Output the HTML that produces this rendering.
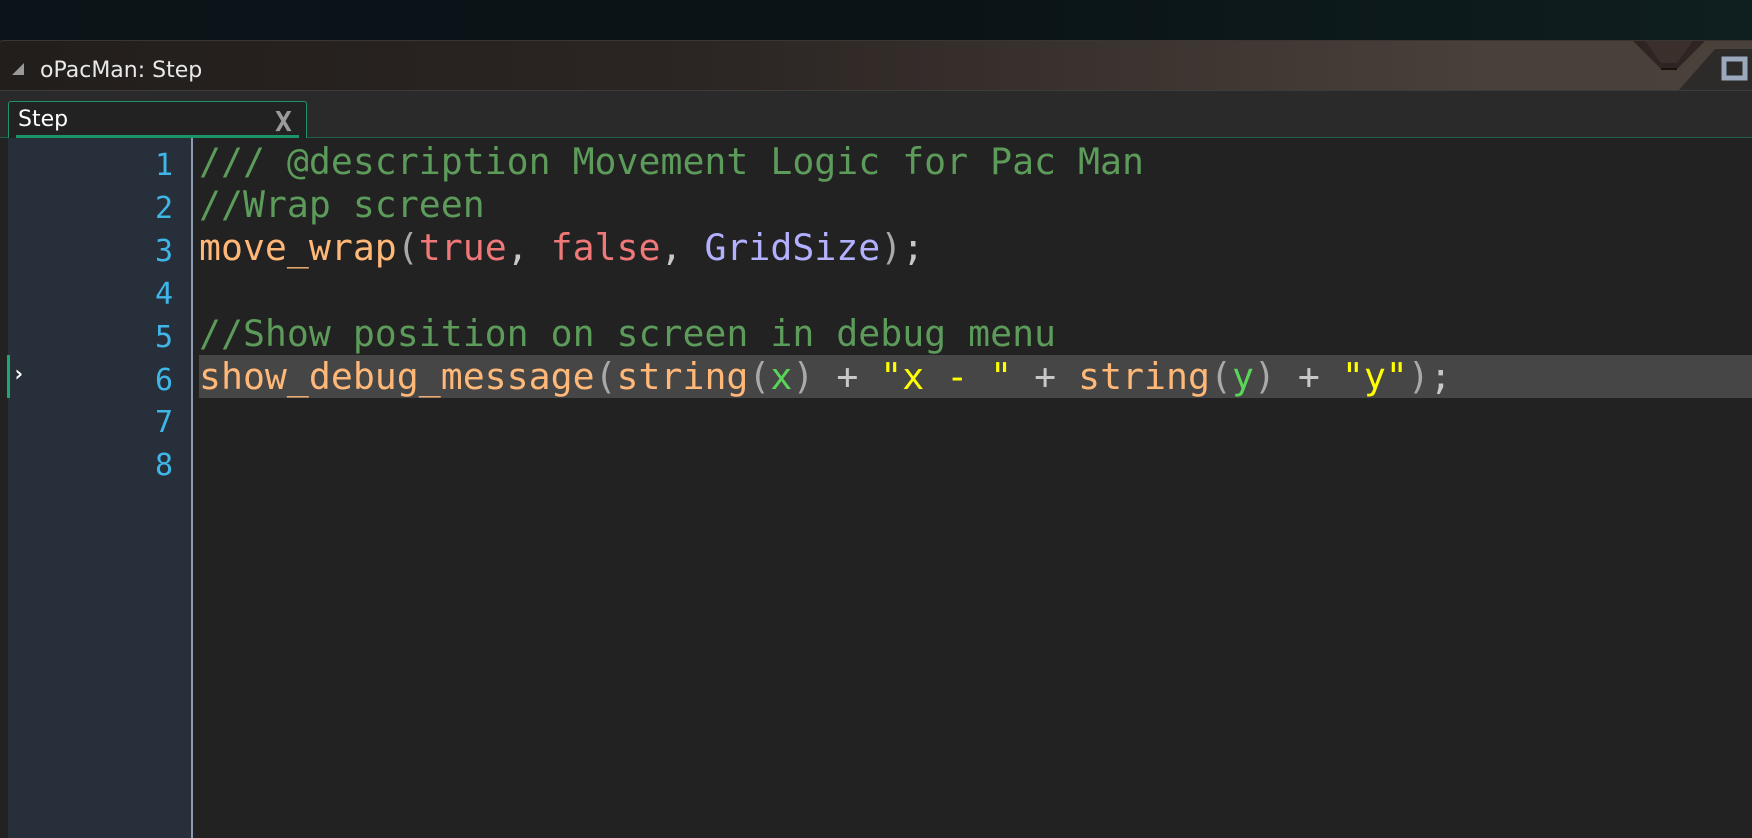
<!DOCTYPE html>
<html><head><meta charset="utf-8"><style>
*{margin:0;padding:0;box-sizing:border-box}
body{width:1752px;height:838px;overflow:hidden;background:#222;position:relative;font-family:"Liberation Sans","DejaVu Sans",sans-serif}
#top{position:absolute;left:0;top:0;width:1752px;height:40px;background:linear-gradient(90deg,#0b1519,#0a1316 50%,#0f1e1f)}
#title{position:absolute;left:0;top:40px;width:1752px;height:50px;background:linear-gradient(90deg,#221e1c,#2b2523 40%,#4a403a 85%,#4b413b);border-top:1px solid #3a3633;border-radius:4px 0 0 0}
#title .t{position:absolute;left:40px;top:17px;color:#e8e8e8;font-size:22px;font-family:"DejaVu Sans",sans-serif}
#title .tri{position:absolute;left:12px;top:22px;width:0;height:0;border-left:12px solid transparent;border-bottom:12px solid #999}
#tabbar{position:absolute;left:0;top:90px;width:1752px;height:48px;background:#2a2a2a;border-top:1px solid #3c3c3c;border-bottom:1px solid #1f5f45}
#tab{position:absolute;left:8px;top:10px;width:299px;height:37px;background:#222;border:1px solid #1c9468;border-bottom:none;border-radius:3px 3px 0 0}
#tab .u{position:absolute;left:7px;right:7px;bottom:0;height:3px;background:#1c9468}
#tab .s{position:absolute;left:9px;top:5px;color:#fff;font-size:22px;font-family:"DejaVu Sans",sans-serif}
#tab .x{position:absolute;left:266px;top:3px;color:#9a9a9a;font-size:28px;font-weight:bold;font-family:"DejaVu Sans Mono",monospace}
#strip{position:absolute;left:0;top:138px;width:8px;height:700px;background:#222}
#gutter{position:absolute;left:8px;top:138px;width:183px;height:700px;background:#27303a}
#sep{position:absolute;left:191px;top:138px;width:2px;height:700px;background:#8d9bb0}
#hl{position:absolute;left:199px;top:355px;width:1553px;height:43px;background:#464646}
#mark{position:absolute;left:7px;top:355px;width:3px;height:43px;background:#1ca870}
#arr{position:absolute;left:12px;top:362px;color:#fff;font-size:22px;font-weight:bold;font-family:"DejaVu Sans Mono",monospace}
#nums{position:absolute;left:8px;top:145px;width:165px;text-align:right;font-family:"DejaVu Sans Mono",monospace;font-size:30px;line-height:42.9px;color:#3fb6e8}
#code{position:absolute;left:199px;top:141px;font-family:"DejaVu Sans Mono","Liberation Mono",monospace;font-size:36.5px;line-height:42.9px;white-space:pre;color:#c8c8c8}
.c{color:#5c9b5a}.f{color:#ffb878}.p{color:#a9a9a9}.k{color:#f07878}.g{color:#b3b1ff}.s{color:#ffff00}.v{color:#59d659}
</style></head><body>
<div id="top"></div>
<div id="title"><div class="tri"></div><div class="t">oPacMan: Step</div>
<svg style="position:absolute;left:0;top:0" width="1752" height="50">
<polygon points="1633,0 1705,0 1677,28 1661,28" fill="#2e2522"/>
<polygon points="1645,0 1693,0 1677,22 1661,22" fill="#3a2f2b"/>
<line x1="1661" y1="28" x2="1677" y2="28" stroke="#1a120f" stroke-width="2"/>
<polygon points="1715,8 1752,8 1752,50 1678,50" fill="#2d2b2a"/>
<rect x="1724" y="18" width="21" height="19" fill="none" stroke="#9ba8be" stroke-width="5"/>
</svg></div>
<div id="tabbar"><div id="tab"><div class="s">Step</div><div class="x">X</div><div class="u"></div></div></div>
<div id="strip"></div><div id="gutter"></div><div id="sep"></div>
<div id="hl"></div><div id="mark"></div><div id="arr">›</div>
<div id="nums">1<br>2<br>3<br>4<br>5<br>6<br>7<br>8</div>
<div id="code"><span class="c">/// @description Movement Logic for Pac Man</span>
<span class="c">//Wrap screen</span>
<span class="f">move_wrap</span><span class="p">(</span><span class="k">true</span>, <span class="k">false</span>, <span class="g">GridSize</span><span class="p">)</span>;

<span class="c">//Show position on screen in debug menu</span>
<span class="f">show_debug_message</span><span class="p">(</span><span class="f">string</span><span class="p">(</span><span class="v">x</span><span class="p">)</span> + <span class="s">"x - "</span> + <span class="f">string</span><span class="p">(</span><span class="v">y</span><span class="p">)</span> + <span class="s">"y"</span><span class="p">)</span>;
</div>
</body></html>
